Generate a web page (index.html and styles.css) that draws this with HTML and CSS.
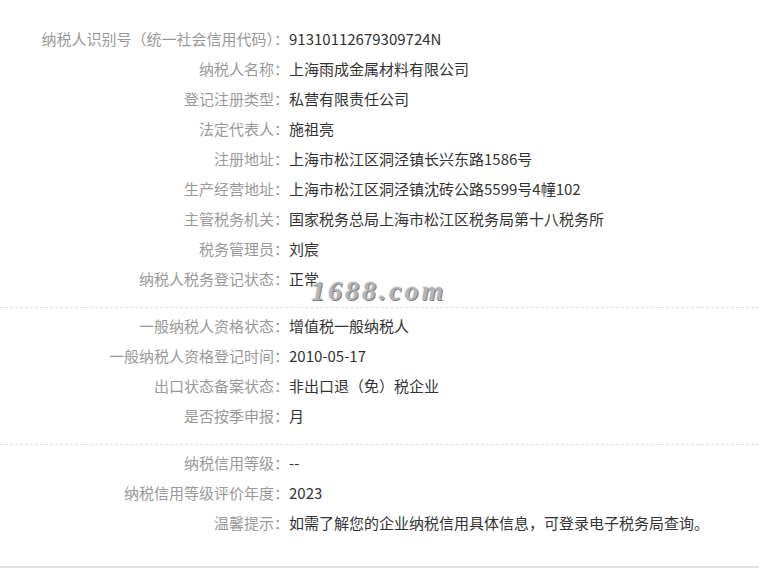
FILE: index.html
```html
<!DOCTYPE html>
<html lang="zh-CN">
  <head>
    <meta charset="UTF-8" />
    <meta name="viewport" content="width=device-width, initial-scale=1.0" />
    <title>税务信息</title>
    <link rel="stylesheet" href="styles.css">
  </head>
  <body>
    <div class="tax-info">
      <div class="group">
        <div class="row"><span class="label">纳税人识别号（统一社会信用代码）：</span><span class="value">91310112679309724N</span></div>
        <div class="row"><span class="label">纳税人名称：</span><span class="value">上海雨成金属材料有限公司</span></div>
        <div class="row"><span class="label">登记注册类型：</span><span class="value">私营有限责任公司</span></div>
        <div class="row"><span class="label">法定代表人：</span><span class="value">施祖亮</span></div>
        <div class="row"><span class="label">注册地址：</span><span class="value">上海市松江区洞泾镇长兴东路1586号</span></div>
        <div class="row"><span class="label">生产经营地址：</span><span class="value">上海市松江区洞泾镇沈砖公路5599号4幢102</span></div>
        <div class="row"><span class="label">主管税务机关：</span><span class="value">国家税务总局上海市松江区税务局第十八税务所</span></div>
        <div class="row"><span class="label">税务管理员：</span><span class="value">刘宸</span></div>
        <div class="row"><span class="label">纳税人税务登记状态：</span><span class="value">正常</span></div>
        <div class="watermark">1688.com</div>
      </div>
      <div class="group">
        <div class="row"><span class="label">一般纳税人资格状态：</span><span class="value">增值税一般纳税人</span></div>
        <div class="row"><span class="label">一般纳税人资格登记时间：</span><span class="value">2010-05-17</span></div>
        <div class="row"><span class="label">出口状态备案状态：</span><span class="value">非出口退（免）税企业</span></div>
        <div class="row"><span class="label">是否按季申报：</span><span class="value">月</span></div>
      </div>
      <div class="group last">
        <div class="row"><span class="label">纳税信用等级：</span><span class="value">--</span></div>
        <div class="row"><span class="label">纳税信用等级评价年度：</span><span class="value">2023</span></div>
        <div class="row"><span class="label">温馨提示：</span><span class="value">如需了解您的企业纳税信用具体信息，可登录电子税务局查询。</span></div>
      </div>
    </div>
  </body>
</html>
```

FILE: styles.css
```css
* {
  margin: 0;
  padding: 0;
  box-sizing: border-box;
}
body {
  background: #fff;
  font-family: "Noto Sans CJK SC", "Noto Sans", sans-serif;
  font-size: 15px;
  color: #333;
}
.tax-info {
  border-bottom: 2px solid #e2e2e2;
}
.group {
  position: relative;
  padding: 3px 0 13px;
  border-bottom: 1px dashed #e0e0e0;
}
.group:first-child {
  padding-top: 24px;
}
.group.last {
  border-bottom: none;
  padding-bottom: 28px;
}
.row {
  display: flex;
  align-items: center;
  height: 30px;
  line-height: 30px;
}
.label {
  width: 289px;
  text-align: right;
  color: #999;
  flex-shrink: 0;
}
.value {
  color: #333;
}
.watermark {
  position: absolute;
  left: 311px;
  top: 277px;
  line-height: 27px;
  font-family: "Liberation Serif", serif;
  font-style: italic;
  font-weight: bold;
  font-size: 28px;
  letter-spacing: 3px;
  color: #b4b4b4;
  text-shadow: 1px 1px 0 #7e7e7e, -1px -1px 0 #f2f2f2;
}
```
